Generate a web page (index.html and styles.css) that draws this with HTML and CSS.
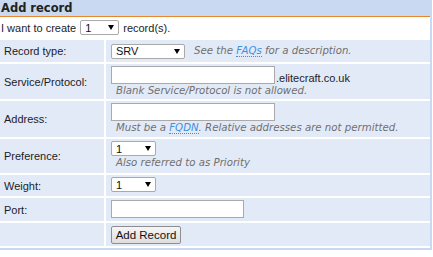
FILE: index.html
```html
<!DOCTYPE html>
<html lang="en">
<head>
    <meta charset="UTF-8">
    <meta name="viewport" content="width=device-width, initial-scale=1.0">
    <title>Add record</title>
    <link rel="stylesheet" href="styles.css">
</head>
<body>
    <div class="panel">
        <h2 class="panel-title">Add record</h2>

        <div class="intro">
            I want to create
            <span class="dropdown dd-count"><select><option>1</option></select></span>
            record(s).
        </div>

        <div class="form-grid">
            <div class="label">Record type:</div>
            <div class="field inline">
                <span class="dropdown dd-type"><select><option>SRV</option></select></span>
                <span class="help">See the <a href="#">FAQs</a> for a description.</span>
            </div>

            <div class="label">Service/Protocol:</div>
            <div class="field">
                <div><input type="text" class="text-long"><span class="domain">.elitecraft.co.uk</span></div>
                <div class="help">Blank Service/Protocol is not allowed.</div>
            </div>

            <div class="label">Address:</div>
            <div class="field">
                <div><input type="text" class="text-long"></div>
                <div class="help">Must be a <a href="#">FQDN</a>. Relative addresses are not permitted.</div>
            </div>

            <div class="label">Preference:</div>
            <div class="field">
                <div><span class="dropdown dd-small"><select><option>1</option></select></span></div>
                <div class="help">Also referred to as Priority</div>
            </div>

            <div class="label">Weight:</div>
            <div class="field">
                <span class="dropdown dd-small"><select><option>1</option></select></span>
            </div>

            <div class="label">Port:</div>
            <div class="field">
                <input type="text" class="text-port">
            </div>

            <div class="label"></div>
            <div class="field">
                <button type="button" class="btn">Add Record</button>
            </div>
        </div>
    </div>
</body>
</html>
```

FILE: styles.css
```css
body { margin: 0; background: #fff; font-family: "Liberation Sans", Arial, sans-serif; font-size: 11px; color: #1c1c28; }

.panel { width: 430px; border-right: 2px solid #c9d9f1; border-bottom: 2px solid #c9d9f1; }
.panel-title { margin: 0; height: 16px; line-height: 16px; padding-left: 1px; background: #c9d9f1; border-bottom: 1px solid #e8862e; font-family: "DejaVu Sans", Verdana, sans-serif; font-size: 11.5px; font-weight: bold; color: #222; width: 429px; }

.intro { height: 21px; display: flex; align-items: center; gap: 4px; padding-left: 1px; }

.form-grid { display: grid; grid-template-columns: 104px 1fr; grid-template-rows: 22px 35px 36px 34px 21px 23px 23px; gap: 2px; padding: 2px 0 2px 0; }
.label { background: #e2eaf7; display: flex; align-items: center; padding-left: 4px; }
.field { background: #e2eaf7; padding: 2px 5px 0; }
.field.inline { display: flex; align-items: center; gap: 9px; padding-top: 0; }

.help { font-family: "DejaVu Sans", Verdana, sans-serif; font-style: italic; font-size: 10.2px; color: #707070; padding-left: 5px; line-height: 14px; }
.field.inline .help { padding-left: 0; }
.help a { color: #3d8fe0; text-decoration: none; border-bottom: 1px dotted #3d8fe0; }

.domain { vertical-align: bottom; margin-left: 1px; }

input[type="text"] { box-sizing: border-box; height: 18px; border: 1px solid #a9a9a9; padding: 0 3px; margin: 0; font: inherit; vertical-align: bottom; background: #fff; }
.text-long { width: 164px; }
.text-port { width: 133px; margin-top: 1px; }

.dropdown { position: relative; display: inline-block; vertical-align: middle; }
.dropdown select { appearance: none; -webkit-appearance: none; box-sizing: border-box; height: 15px; border: 1px solid #a9a9a9; border-radius: 2px; background: #fff; font: inherit; color: #111; padding: 0 0 0 4px; margin: 0; display: block; }
.dropdown::after { content: ""; position: absolute; top: 5px; right: 5px; border-left: 3.5px solid transparent; border-right: 3.5px solid transparent; border-top: 5px solid #000; pointer-events: none; }
.dd-count select { width: 39px; }
.dd-type select { width: 74px; }
.dd-small select { width: 45px; }

.btn { box-sizing: border-box; height: 18px; width: 70px; margin-top: 1px; padding: 0; font: inherit; font-size: 11.5px; color: #111; border: 1px solid #8e8e8e; border-radius: 2px; background: linear-gradient(#f6f6f6, #dedede); }
```
